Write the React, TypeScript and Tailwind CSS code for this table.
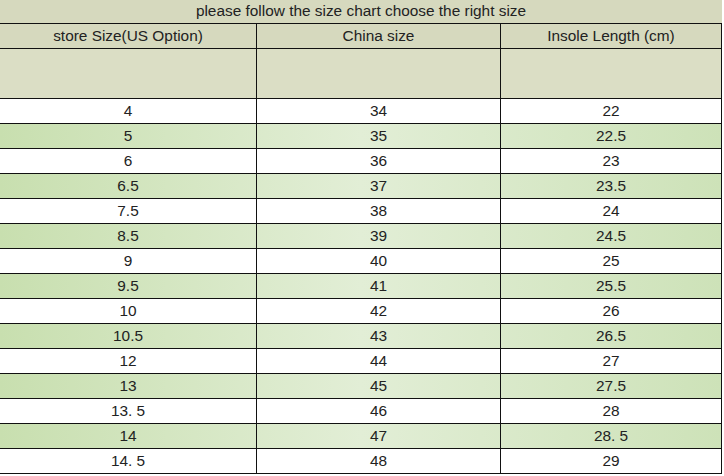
const ROWS: [string, string, string][] = [
  ["4", "34", "22"],
  ["5", "35", "22.5"],
  ["6", "36", "23"],
  ["6.5", "37", "23.5"],
  ["7.5", "38", "24"],
  ["8.5", "39", "24.5"],
  ["9", "40", "25"],
  ["9.5", "41", "25.5"],
  ["10", "42", "26"],
  ["10.5", "43", "26.5"],
  ["12", "44", "27"],
  ["13", "45", "27.5"],
  ["13. 5", "46", "28"],
  ["14", "47", "28. 5"],
  ["14. 5", "48", "29"],
];

const cell = "flex items-center justify-center border-r border-[#111]";

export default function App() {
  return (
    <div className="h-[476px] w-[724px] overflow-hidden bg-white font-['Liberation_Sans',Arial,sans-serif] text-[15.4px] text-[#222]">
      <div className="w-[722px]">
        <div className="flex h-[24px] items-center justify-center border-b border-[#111] bg-[#d6d9be] pb-[1px]">
          please follow the size chart choose the right size
        </div>

        <div className="flex h-[25px] border-b border-[#111] bg-[#d6d9be]">
          <div className={`${cell} w-[257px]`}>store Size(US Option)</div>
          <div className={`${cell} w-[244px]`}>China size</div>
          <div className={`${cell} w-[221px]`}>Insole Length (cm)</div>
        </div>

        <div className="flex h-[50px] border-b border-[#111] bg-[#dbdec5]">
          <div className={`${cell} w-[257px]`} />
          <div className={`${cell} w-[244px]`} />
          <div className={`${cell} w-[221px]`} />
        </div>

        {ROWS.map(([us, cn, len], i) => (
          <div
            key={us}
            className={
              i % 2 === 1
                ? "flex h-[25px] border-b border-[#111] bg-linear-to-r from-[#c8dfaf] via-[#e2eed6] to-[#cde2b8]"
                : "flex h-[25px] border-b border-[#111] bg-white"
            }
          >
            <div className={`${cell} w-[257px]`}>{us}</div>
            <div className={`${cell} w-[244px]`}>{cn}</div>
            <div className={`${cell} w-[221px]`}>{len}</div>
          </div>
        ))}
      </div>
    </div>
  );
}
